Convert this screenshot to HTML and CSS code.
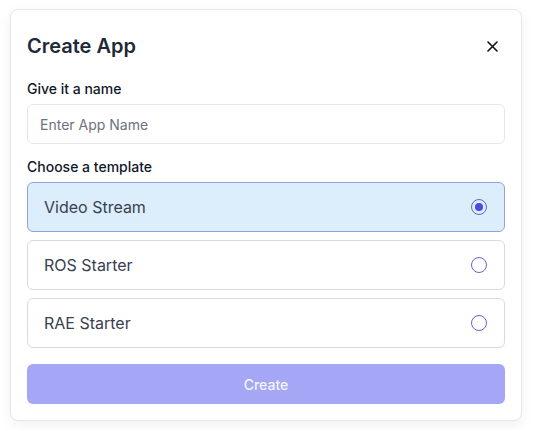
FILE: index.html
```html
<!DOCTYPE html>
<html lang="en">
<head>
    <meta charset="UTF-8">
    <meta name="viewport" content="width=device-width, initial-scale=1.0">
    <title>Create App</title>
    <link rel="stylesheet" href="styles.css">
</head>
<body>
    <div class="modal">
        <div class="modal-header">
            <h2>Create App</h2>
            <button class="close-btn" aria-label="Close">
                <svg width="11" height="11" viewBox="0 0 11 11" fill="none" stroke="#111" stroke-width="1.6" stroke-linecap="round">
                    <path d="M1 1L10 10M10 1L1 10"/>
                </svg>
            </button>
        </div>

        <label class="field-label" for="appName">Give it a name</label>
        <input type="text" id="appName" class="text-input" placeholder="Enter App Name">

        <div class="field-label section">Choose a template</div>
        <div class="options">
            <label class="option selected">
                <span>Video Stream</span>
                <input type="radio" name="template" checked>
                <span class="radio"></span>
            </label>
            <label class="option">
                <span>ROS Starter</span>
                <input type="radio" name="template">
                <span class="radio"></span>
            </label>
            <label class="option">
                <span>RAE Starter</span>
                <input type="radio" name="template">
                <span class="radio"></span>
            </label>
        </div>

        <button class="create-btn" disabled>Create</button>
    </div>
</body>
</html>
```

FILE: styles.css
```css
* { margin: 0; padding: 0; box-sizing: border-box; }
body {
    font-family: Inter, "Noto Sans", sans-serif;
    background: #fff;
    padding: 9px 10px;
}
.modal {
    width: 512px;
    background: #fff;
    border: 1px solid #e5e7eb;
    border-radius: 8px;
    padding: 22px 16px 16px;
    box-shadow: 0 4px 14px rgba(0, 0, 0, 0.06);
    display: flex;
    flex-direction: column;
}
.modal-header {
    display: flex;
    align-items: center;
    justify-content: space-between;
    height: 28px;
    margin-bottom: 19px;
}
.modal-header h2 {
    font-size: 20px;
    font-weight: 600;
    color: #1f2937;
    line-height: 28px;
}
.close-btn {
    background: none;
    border: none;
    width: 24px;
    height: 24px;
    display: flex;
    align-items: center;
    justify-content: center;
    margin-right: 1px;
    cursor: pointer;
}
.field-label {
    font-size: 14px;
    font-weight: 500;
    color: #111827;
    line-height: 20px;
    margin-bottom: 5px;
}
.field-label.section { margin-top: 13px; }
.text-input {
    height: 40px;
    border: 1px solid #e5e7eb;
    border-radius: 6px;
    padding: 0 12px;
    font-family: inherit;
    font-size: 14px;
    color: #111827;
}
.text-input::placeholder { color: #6b7280; }
.options {
    display: flex;
    flex-direction: column;
    gap: 8px;
}
.option {
    height: 50px;
    border: 1px solid #d8dadf;
    border-radius: 6px;
    padding: 0 16px;
    display: flex;
    align-items: center;
    justify-content: space-between;
    font-size: 16px;
    color: #374151;
    cursor: pointer;
}
.option.selected {
    background: #dcedfc;
    border-color: #8fa2df;
}
.option input { display: none; }
.radio {
    width: 16px;
    height: 16px;
    border: 1.5px solid #6264d4;
    border-radius: 50%;
    margin-right: 1px;
    display: flex;
    align-items: center;
    justify-content: center;
}
.option.selected .radio::after {
    content: "";
    width: 8px;
    height: 8px;
    border-radius: 50%;
    background: #4f46e5;
}
.create-btn {
    margin-top: 16px;
    height: 40px;
    border: none;
    border-radius: 6px;
    background: #a5a7f6;
    color: rgba(255, 255, 255, 0.9);
    font-family: inherit;
    font-size: 14px;
    font-weight: 500;
}
```
